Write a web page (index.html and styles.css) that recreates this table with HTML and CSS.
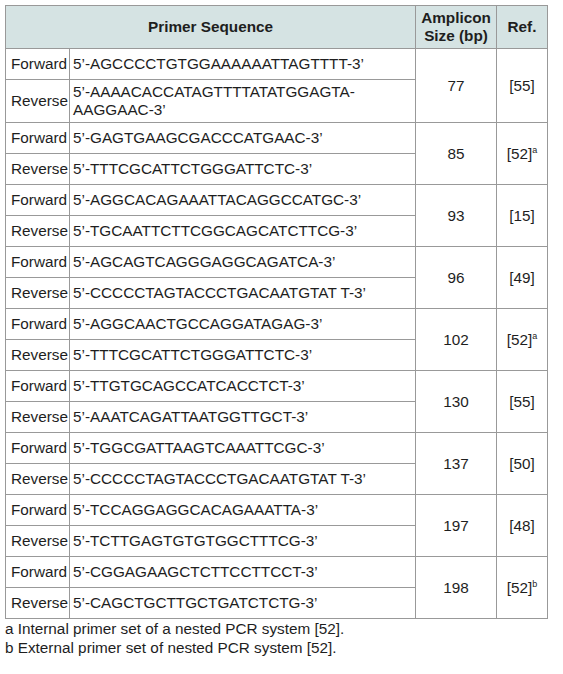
FILE: index.html
```html
<!DOCTYPE html>
<html>
<head>
<meta charset="utf-8">
<link rel="stylesheet" href="styles.css">
</head>
<body>
<div class="page">
<table class="primers">
  <colgroup>
    <col class="c-dir"><col class="c-seq"><col class="c-size"><col class="c-ref">
  </colgroup>
  <thead>
    <tr>
      <th colspan="2">Primer Sequence</th>
      <th>Amplicon Size (bp)</th>
      <th>Ref.</th>
    </tr>
  </thead>
  <tbody>
    <tr><td class="dir">Forward</td><td class="seq">5’-AGCCCCTGTGGAAAAAATTAGTTTT-3’</td><td class="num" rowspan="2">77</td><td class="num" rowspan="2">[55]</td></tr>
    <tr><td class="dir">Reverse</td><td class="seq">5’-AAAACACCATAGTTTTATATGGAGTA-AAGGAAC-3’</td></tr>

    <tr><td class="dir">Forward</td><td class="seq">5’-GAGTGAAGCGACCCATGAAC-3’</td><td class="num" rowspan="2">85</td><td class="num" rowspan="2">[52]<sup>a</sup></td></tr>
    <tr><td class="dir">Reverse</td><td class="seq">5’-TTTCGCATTCTGGGATTCTC-3’</td></tr>

    <tr><td class="dir">Forward</td><td class="seq">5’-AGGCACAGAAATTACAGGCCATGC-3’</td><td class="num" rowspan="2">93</td><td class="num" rowspan="2">[15]</td></tr>
    <tr><td class="dir">Reverse</td><td class="seq">5’-TGCAATTCTTCGGCAGCATCTTCG-3’</td></tr>

    <tr><td class="dir">Forward</td><td class="seq">5’-AGCAGTCAGGGAGGCAGATCA-3’</td><td class="num" rowspan="2">96</td><td class="num" rowspan="2">[49]</td></tr>
    <tr><td class="dir">Reverse</td><td class="seq">5’-CCCCCTAGTACCCTGACAATGTAT T-3’</td></tr>

    <tr><td class="dir">Forward</td><td class="seq">5’-AGGCAACTGCCAGGATAGAG-3’</td><td class="num" rowspan="2">102</td><td class="num" rowspan="2">[52]<sup>a</sup></td></tr>
    <tr><td class="dir">Reverse</td><td class="seq">5’-TTTCGCATTCTGGGATTCTC-3’</td></tr>

    <tr><td class="dir">Forward</td><td class="seq">5’-TTGTGCAGCCATCACCTCT-3’</td><td class="num" rowspan="2">130</td><td class="num" rowspan="2">[55]</td></tr>
    <tr><td class="dir">Reverse</td><td class="seq">5’-AAATCAGATTAATGGTTGCT-3’</td></tr>

    <tr><td class="dir">Forward</td><td class="seq">5’-TGGCGATTAAGTCAAATTCGC-3’</td><td class="num" rowspan="2">137</td><td class="num" rowspan="2">[50]</td></tr>
    <tr><td class="dir">Reverse</td><td class="seq">5’-CCCCCTAGTACCCTGACAATGTAT T-3’</td></tr>

    <tr><td class="dir">Forward</td><td class="seq">5’-TCCAGGAGGCACAGAAATTA-3’</td><td class="num" rowspan="2">197</td><td class="num" rowspan="2">[48]</td></tr>
    <tr><td class="dir">Reverse</td><td class="seq">5’-TCTTGAGTGTGTGGCTTTCG-3’</td></tr>

    <tr><td class="dir">Forward</td><td class="seq">5’-CGGAGAAGCTCTTCCTTCCT-3’</td><td class="num" rowspan="2">198</td><td class="num" rowspan="2">[52]<sup>b</sup></td></tr>
    <tr><td class="dir">Reverse</td><td class="seq">5’-CAGCTGCTTGCTGATCTCTG-3’</td></tr>
  </tbody>
</table>
<div class="notes">
  <p>a Internal primer set of a nested PCR system [52].</p>
  <p>b External primer set of nested PCR system [52].</p>
</div>
</div>
</body>
</html>
```
FILE: styles.css
```css
html, body {
  margin: 0;
  padding: 0;
  background: #fff;
}
.page {
  padding: 5px 0 0 5px;
  font-family: "Liberation Sans", Arial, sans-serif;
  font-size: 15.3px;
  line-height: 18px;
  color: #1e1e1e;
}
.primers {
  border-collapse: collapse;
  table-layout: fixed;
  width: 542px;
}
.c-dir { width: 64px; }
.c-seq { width: 346px; }
.c-size { width: 81px; }
.c-ref { width: 51px; }
.primers th,
.primers td {
  border: 1px solid #999;
  padding: 3px 5px;
}
.primers th {
  background: #d5e3e3;
  font-weight: bold;
  text-align: center;
  vertical-align: middle;
  height: 43px;
  box-sizing: border-box;
}
.primers td {
  height: 31px;
  box-sizing: border-box;
  vertical-align: middle;
}
.primers td.dir {
  padding: 3px 2px 3px 5px;
  white-space: nowrap;
}
.primers td.seq {
  padding-left: 3px;
}
.primers td.num {
  text-align: center;
}
.primers sup {
  font-size: 9px;
  line-height: 0;
  vertical-align: 6px;
}
.notes p {
  margin: 0;
  line-height: 19px;
}
```
